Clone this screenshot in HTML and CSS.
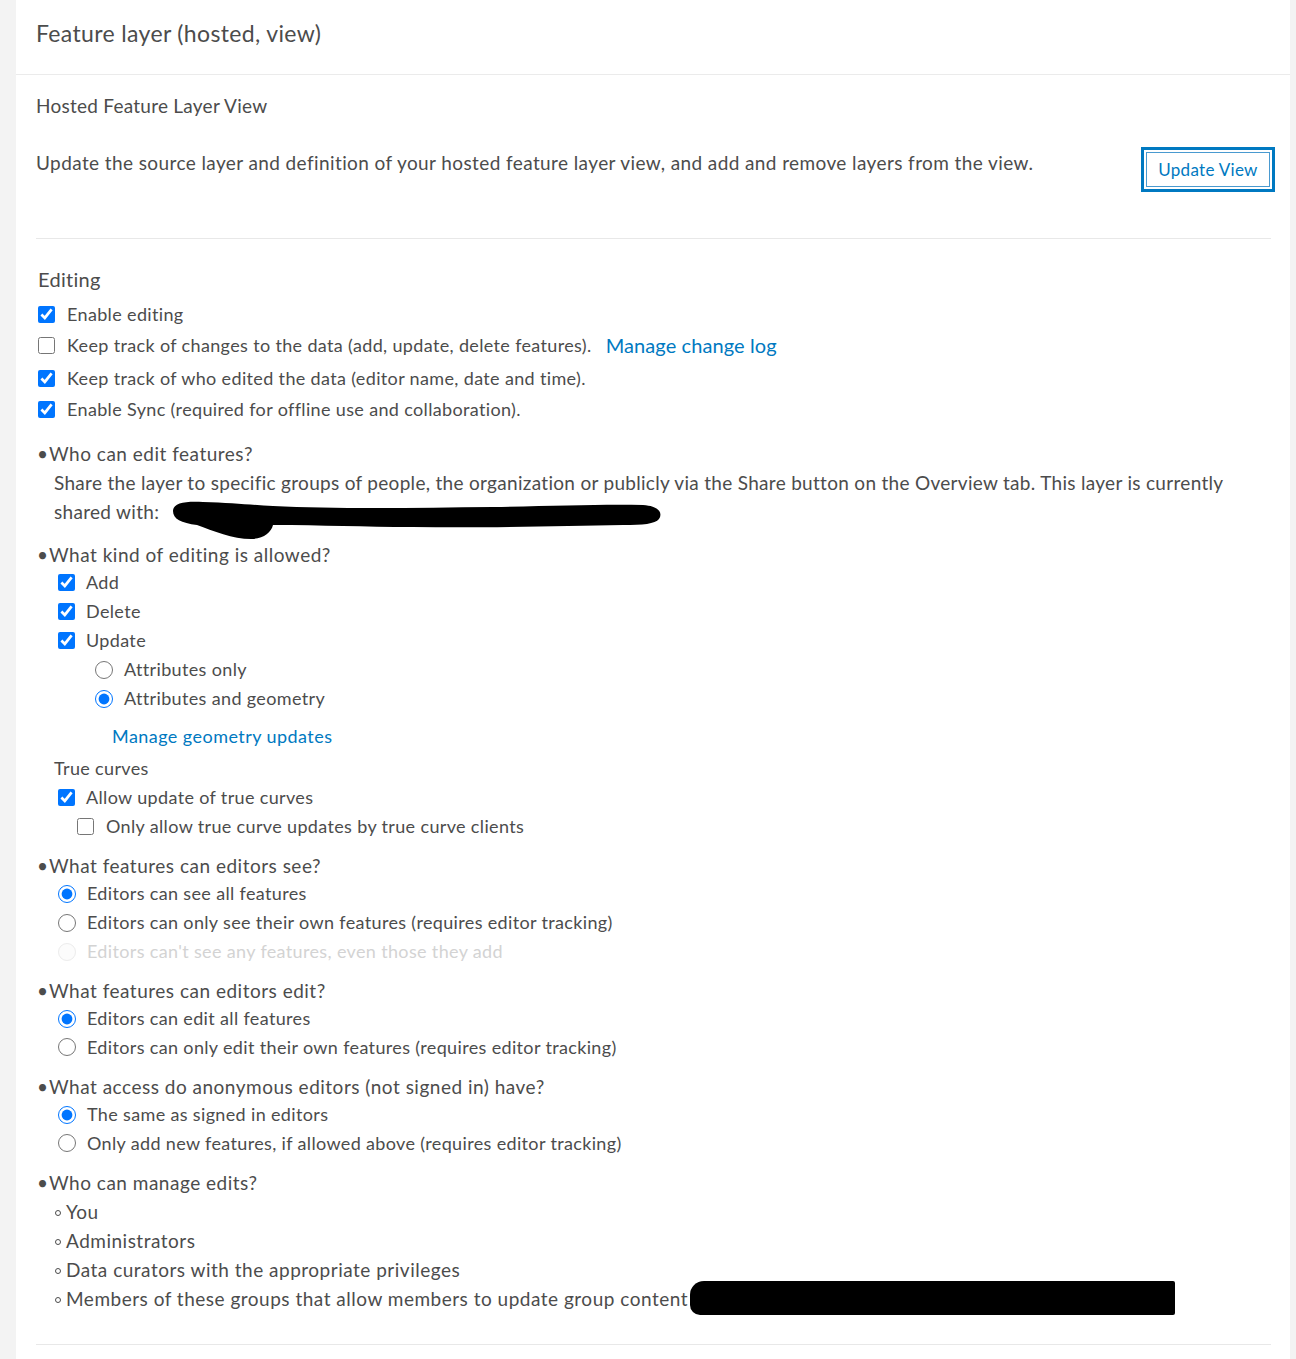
FILE: index.html
```html
<!DOCTYPE html>
<html lang="en">
<head>
<meta charset="utf-8">
<title>Feature layer (hosted, view)</title>
<link rel="stylesheet" href="styles.css">
</head>
<body>
<div class="panel">
  <header class="panel-head">
    <h1 class="title">Feature layer (hosted, view)</h1>
  </header>
  <div class="panel-body">
    <section class="view-section">
      <h2 class="subtitle">Hosted Feature Layer View</h2>
      <div class="view-row">
        <p class="view-desc">Update the source layer and definition of your hosted feature layer view, and add and remove layers from the view.</p>
        <button class="btn-outline">Update View</button>
      </div>
    </section>

    <section class="editing">
      <h3 class="section-title">Editing</h3>
      <label class="check row-1"><input type="checkbox" checked><span>Enable editing</span></label>
      <label class="check row-1"><input type="checkbox"><span>Keep track of changes to the data (add, update, delete features).</span><a class="link link-lg" href="#">Manage change log</a></label>
      <label class="check row-1 row-gap"><input type="checkbox" checked><span>Keep track of who edited the data (editor name, date and time).</span></label>
      <label class="check row-1"><input type="checkbox" checked><span>Enable Sync (required for offline use and collaboration).</span></label>

      <div class="q q-first">
        <p class="q-title"><span class="dot">•</span>Who can edit features?</p>
        <p class="share-text">Share the layer to specific groups of people, the organization or publicly via the Share button on the Overview tab. This layer is currently shared with: <span class="redact-anchor"><svg class="redact-1" width="510" height="46" viewBox="0 0 510 46"><path d="M10 14 C10 6 22 4 40 5 C70 6 90 8 110 9 C170 12 250 11 330 10 C390 9 440 7 480 8 C496 9 500 16 496 22 C492 27 480 28 460 28 C400 29 330 31 250 30 C200 30 160 28 110 28 C108 36 100 42 88 42 C70 42 50 34 34 28 C18 26 10 22 10 14 Z" fill="#000"/></svg></span></p>
      </div>

      <div class="q q-kind">
        <p class="q-title"><span class="dot">•</span>What kind of editing is allowed?</p>
        <label class="check row-2"><input type="checkbox" checked><span>Add</span></label>
        <label class="check row-2"><input type="checkbox" checked><span>Delete</span></label>
        <label class="check row-2"><input type="checkbox" checked><span>Update</span></label>
        <label class="check row-3"><input type="radio" name="upd"><span>Attributes only</span></label>
        <label class="check row-3"><input type="radio" name="upd" checked><span>Attributes and geometry</span></label>
        <a class="link geom-link" href="#">Manage geometry updates</a>
        <p class="sub-label">True curves</p>
        <label class="check row-2 after-sub"><input type="checkbox" checked><span>Allow update of true curves</span></label>
        <label class="check row-2b"><input type="checkbox"><span>Only allow true curve updates by true curve clients</span></label>
      </div>

      <div class="q q-see">
        <p class="q-title"><span class="dot">•</span>What features can editors see?</p>
        <label class="check row-2"><input type="radio" name="see" checked><span>Editors can see all features</span></label>
        <label class="check row-2"><input type="radio" name="see"><span>Editors can only see their own features (requires editor tracking)</span></label>
        <label class="check row-2 disabled"><input type="radio" name="see" disabled><span>Editors can't see any features, even those they add</span></label>
      </div>

      <div class="q">
        <p class="q-title"><span class="dot">•</span>What features can editors edit?</p>
        <label class="check row-2"><input type="radio" name="edit" checked><span>Editors can edit all features</span></label>
        <label class="check row-2 row-28"><input type="radio" name="edit"><span>Editors can only edit their own features (requires editor tracking)</span></label>
      </div>

      <div class="q q-13">
        <p class="q-title"><span class="dot">•</span>What access do anonymous editors (not signed in) have?</p>
        <label class="check row-2"><input type="radio" name="anon" checked><span>The same as signed in editors</span></label>
        <label class="check row-2 row-28"><input type="radio" name="anon"><span>Only add new features, if allowed above (requires editor tracking)</span></label>
      </div>

      <div class="q q-13">
        <p class="q-title"><span class="dot">•</span>Who can manage edits?</p>
        <ul class="managers">
          <li>You</li>
          <li>Administrators</li>
          <li>Data curators with the appropriate privileges</li>
          <li>Members of these groups that allow members to update group content<span class="redact-anchor"><span class="redact-2"></span></span></li>
        </ul>
      </div>
    </section>
  </div>
</div>
</body>
</html>
```

FILE: styles.css
```css
* { box-sizing: border-box; }
html, body { margin: 0; padding: 0; }
body {
  background: #f3f3f3;
  font-family: "Lato", "Open Sans", sans-serif;
  color: #4c4c4c;
}
.panel {
  margin-left: 16px;
  width: 1274px;
  min-height: 1359px;
  background: #fff;
}
.panel-head {
  height: 75px;
  border-bottom: 1px solid #ebebeb;
  padding: 0 20px;
  display: flex;
  align-items: center;
}
.title {
  margin: 0;
  font-size: 23px;
  letter-spacing: 0.35px;
  font-weight: 400;
  color: #4c4c4c;
  padding-bottom: 8px;
}
.panel-body {
  padding: 0 19px 0 20px;
}
.view-section {
  border-bottom: 1px solid #e8e8e8;
  padding-top: 19px;
  height: 164px;
}
.subtitle {
  margin: 0;
  font-size: 19px;
  letter-spacing: 0.25px;
  font-weight: 400;
  line-height: 24px;
}
.view-row {
  display: flex;
  justify-content: space-between;
  align-items: flex-start;
  margin-top: 18px;
}
.view-desc {
  margin: 15px 0 0;
  font-size: 19px;
  letter-spacing: 0.4px;
  line-height: 24px;
}
.btn-outline {
  margin-top: 16px;
  margin-right: 1px;
  flex: none;
  font-family: inherit;
  font-size: 17px;
  letter-spacing: 0.3px;
  color: #0079c1;
  background: #fff;
  border: 1px solid #4a9ad0;
  padding: 0;
  height: 35px;
  width: 124px;
  outline: 3px solid #0079c1;
  outline-offset: 2px;
  cursor: pointer;
}
.editing {
  padding-top: 27px;
  padding-left: 2px;
  padding-bottom: 31px;
  border-bottom: 1px solid #e8e8e8;
  font-size: 18px;
  letter-spacing: 0.35px;
}
.section-title {
  margin: 0 0 7px;
  font-size: 20px;
  letter-spacing: 0.3px;
  font-weight: 400;
  line-height: 26px;
}
.check {
  display: flex;
  align-items: center;
  height: 29px;
  line-height: 29px;
  white-space: nowrap;
}
.check input {
  width: 17px;
  height: 17px;
  margin: 0 12px 0 0;
  flex: none;
}
.check input[type="radio"] {
  width: 18px;
  height: 18px;
  margin-right: 11px;
}
.row-1 { height: 31px; }
.row-gap { margin-top: 2px; }
.row-28 { height: 28px; }
.row-2 { padding-left: 20px; }
.row-2 input[type="checkbox"] { margin-right: 11px; }
.row-2b { padding-left: 39px; }
.row-3 { padding-left: 57px; }
.disabled { color: #d3d3d3; }
.disabled input { opacity: 0.4; }
.link {
  color: #0079c1;
  text-decoration: none;
}
.link-lg {
  font-size: 20px;
  letter-spacing: 0.1px;
  margin-left: 14px;
}
.q { margin-top: 12px; }
.q-13 { margin-top: 13px; }
.q-first { margin-top: 16px; }
.q-title {
  margin: 0;
  font-size: 19px;
  letter-spacing: 0.5px;
  line-height: 26px;
}
.dot {
  display: inline-block;
  width: 12px;
  margin-left: -1px;
  letter-spacing: 0;
}
.share-text {
  margin: 1px 0 0;
  padding-left: 16px;
  font-size: 19px;
  letter-spacing: 0.3px;
  line-height: 29px;
  max-width: 1216px;
}
.q-kind { margin-top: 16px; }
.q-see { margin-top: 12px; }
.redact-anchor {
  position: relative;
  display: inline-block;
  width: 0;
  height: 0;
}
.redact-1 {
  position: absolute;
  left: -1px;
  top: -22px;
  display: block;
}
.geom-link {
  display: block;
  margin: 13px 0 0 74px;
  font-size: 18px;
  letter-spacing: 0.45px;
  line-height: 20px;
}
.sub-label {
  margin: 11px 0 0 16px;
  line-height: 22px;
}
.after-sub { margin-top: 4px; }
.managers {
  list-style: none;
  margin: 1px 0 0;
  padding-left: 16px;
  font-size: 19px;
  letter-spacing: 0.5px;
}
.managers li {
  line-height: 29px;
  position: relative;
  padding-left: 12px;
}
.managers li::before {
  content: "";
  position: absolute;
  left: 1px;
  top: 13px;
  width: 4px;
  height: 4px;
  border: 1px solid #4c4c4c;
  border-radius: 50%;
}
.redact-2 {
  position: absolute;
  left: 2px;
  top: -25px;
  width: 485px;
  height: 34px;
  background: #000;
  border-radius: 14px 2px 2px 10px;
}
```
